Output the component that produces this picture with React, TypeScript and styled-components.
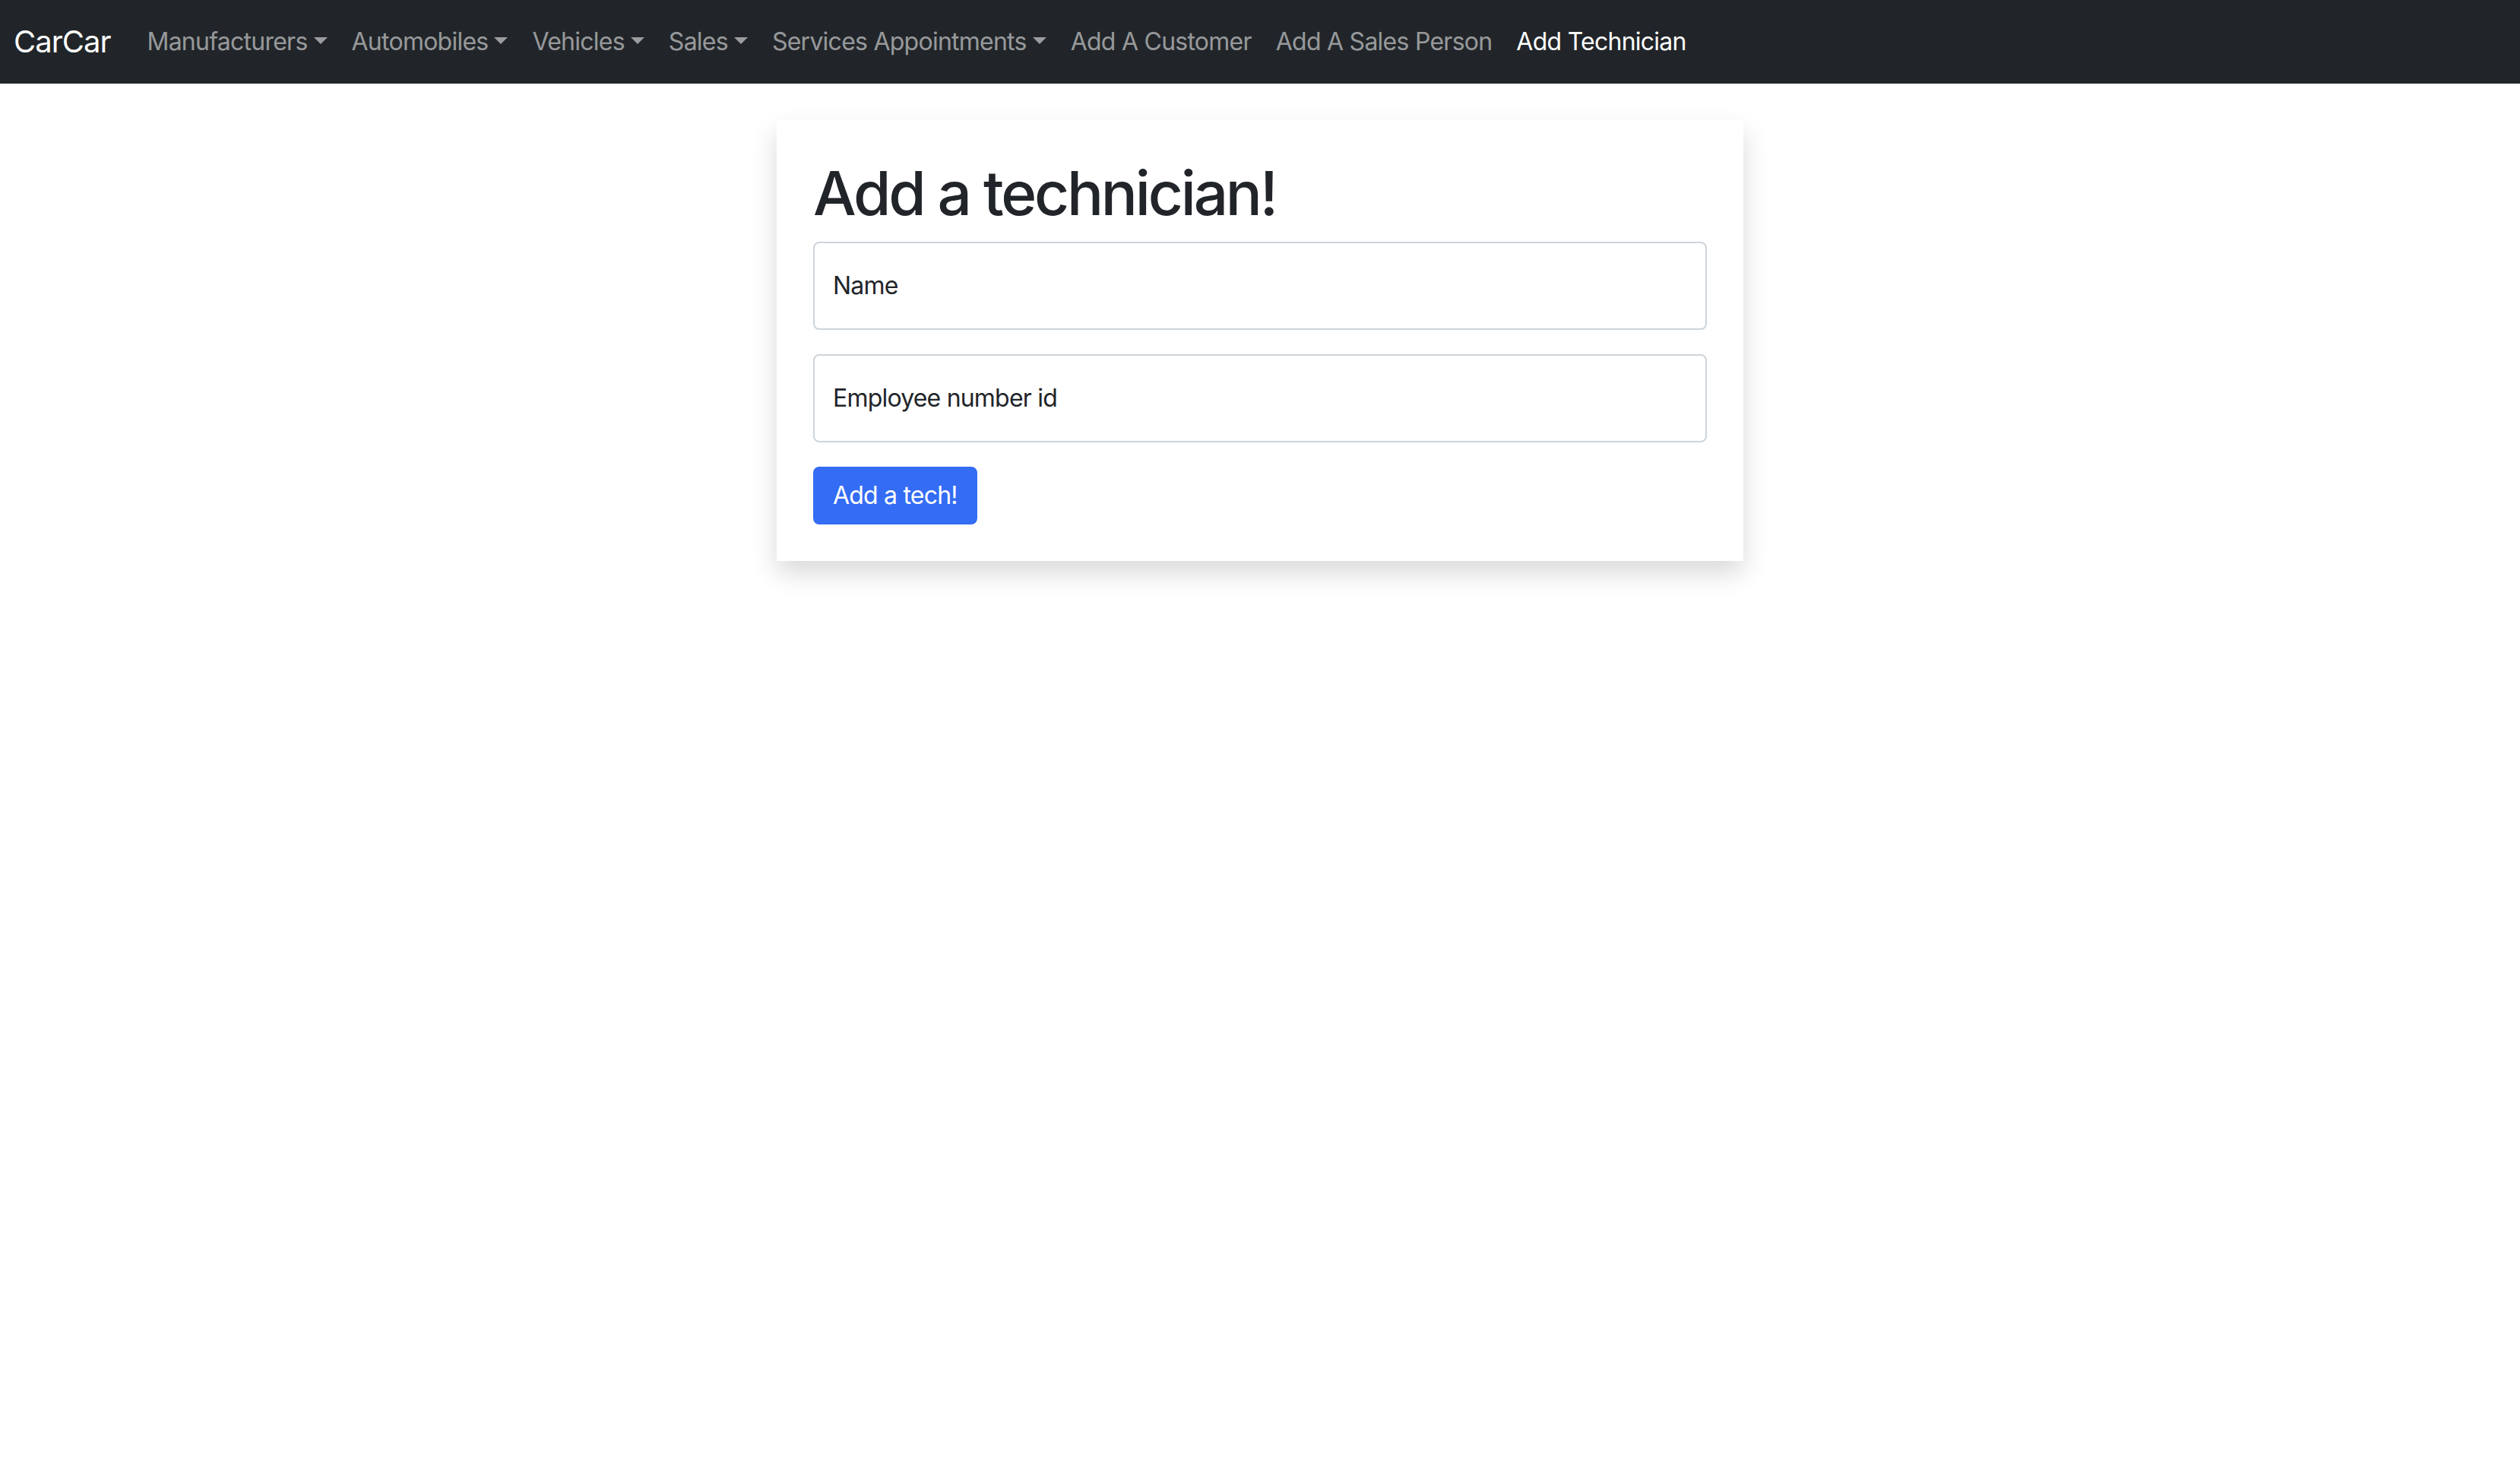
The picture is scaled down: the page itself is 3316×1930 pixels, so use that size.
import React from 'react';
import styled, { createGlobalStyle } from 'styled-components';

const GlobalStyle = createGlobalStyle`
    body {
        margin: 0;
        background-color: #ffffff;
        color: #212529;
        font-family: Inter, 'Liberation Sans', 'Noto Sans', sans-serif;
    }
    * {
        box-sizing: border-box;
    }
`;

const Navbar = styled.nav`
    display: flex;
    align-items: center;
    height: 110px;
    padding: 0 18px;
    background-color: #212529;
`;

const Brand = styled.a`
    font-size: 40px;
    line-height: 60px;
    letter-spacing: -1px;
    color: #ffffff;
    text-decoration: none;
    margin-right: 32px;
`;

const NavList = styled.ul`
    display: flex;
    align-items: center;
    list-style: none;
    margin: 0;
    padding: 0;
`;

const NavLink = styled.a<{ $active?: boolean }>`
    display: block;
    padding: 16px;
    font-size: 32px;
    line-height: 48px;
    letter-spacing: -0.75px;
    color: ${(props) => props.$active ? "#ffffff" : "rgba(255, 255, 255, 0.55)"};
    text-decoration: none;
    white-space: nowrap;
`;

const Caret = styled.span`
    display: inline-block;
    margin-left: 8px;
    vertical-align: 8px;
    border-top: 9.6px solid;
    border-left: 9.6px solid transparent;
    border-right: 9.6px solid transparent;
    border-bottom: 0;
`;

const Container = styled.main`
    max-width: 2640px;
    margin: 0 auto;
    padding-bottom: 96px;
`;

const Column = styled.div`
    width: 50%;
    margin-left: 25%;
    padding: 0 24px;
`;

const Card = styled.div`
    margin-top: 48px;
    padding: 48px;
    background-color: #ffffff;
    box-shadow: 0 16px 32px rgba(0, 0, 0, 0.15);
`;

const Title = styled.h1`
    margin: 0 0 16px;
    font-size: 80px;
    font-weight: 500;
    line-height: 1.2;
    letter-spacing: -3.2px;
    color: #212529;
`;

const Field = styled.div`
    position: relative;
    margin-bottom: 32px;
`;

const Input = styled.input`
    display: block;
    width: 100%;
    height: 116px;
    padding: 0 24px;
    font-family: inherit;
    font-size: 32px;
    color: #212529;
    background-color: #ffffff;
    border: 2px solid #ced4da;
    border-radius: 8px;
    outline: none;
`;

// floating label sits over the empty input
const Label = styled.label`
    position: absolute;
    top: 0;
    left: 0;
    padding: 32px 24px;
    border: 2px solid transparent;
    font-size: 32px;
    line-height: 48px;
    letter-spacing: -0.8px;
    color: #212529;
    pointer-events: none;
`;

const Button = styled.button`
    display: inline-block;
    padding: 12px 24px;
    font-family: inherit;
    font-size: 32px;
    line-height: 48px;
    letter-spacing: -0.8px;
    color: #ffffff;
    background-color: #346cf4;
    border: 2px solid #346cf4;
    border-radius: 8px;
    cursor: pointer;
`;

const menus = ["Manufacturers", "Automobiles", "Vehicles", "Sales", "Services Appointments"];
const links = ["Add A Customer", "Add A Sales Person"];

export default function App() {
    return (
        <>
            <GlobalStyle />
            <Navbar>
                <Brand href="#">CarCar</Brand>
                <NavList>
                    {menus.map((m) => (
                        <li key={m}>
                            <NavLink href="#">{m}<Caret /></NavLink>
                        </li>
                    ))}
                    {links.map((l) => (
                        <li key={l}>
                            <NavLink href="#">{l}</NavLink>
                        </li>
                    ))}
                    <li>
                        <NavLink href="#" $active>Add Technician</NavLink>
                    </li>
                </NavList>
            </Navbar>
            <Container>
                <Column>
                    <Card>
                        <Title>Add a technician!</Title>
                        <form onSubmit={(e) => e.preventDefault()}>
                            <Field>
                                <Input id="name" type="text" />
                                <Label htmlFor="name">Name</Label>
                            </Field>
                            <Field>
                                <Input id="employee_number" type="text" />
                                <Label htmlFor="employee_number">Employee number id</Label>
                            </Field>
                            <Button type="submit">Add a tech!</Button>
                        </form>
                    </Card>
                </Column>
            </Container>
        </>
    );
}
